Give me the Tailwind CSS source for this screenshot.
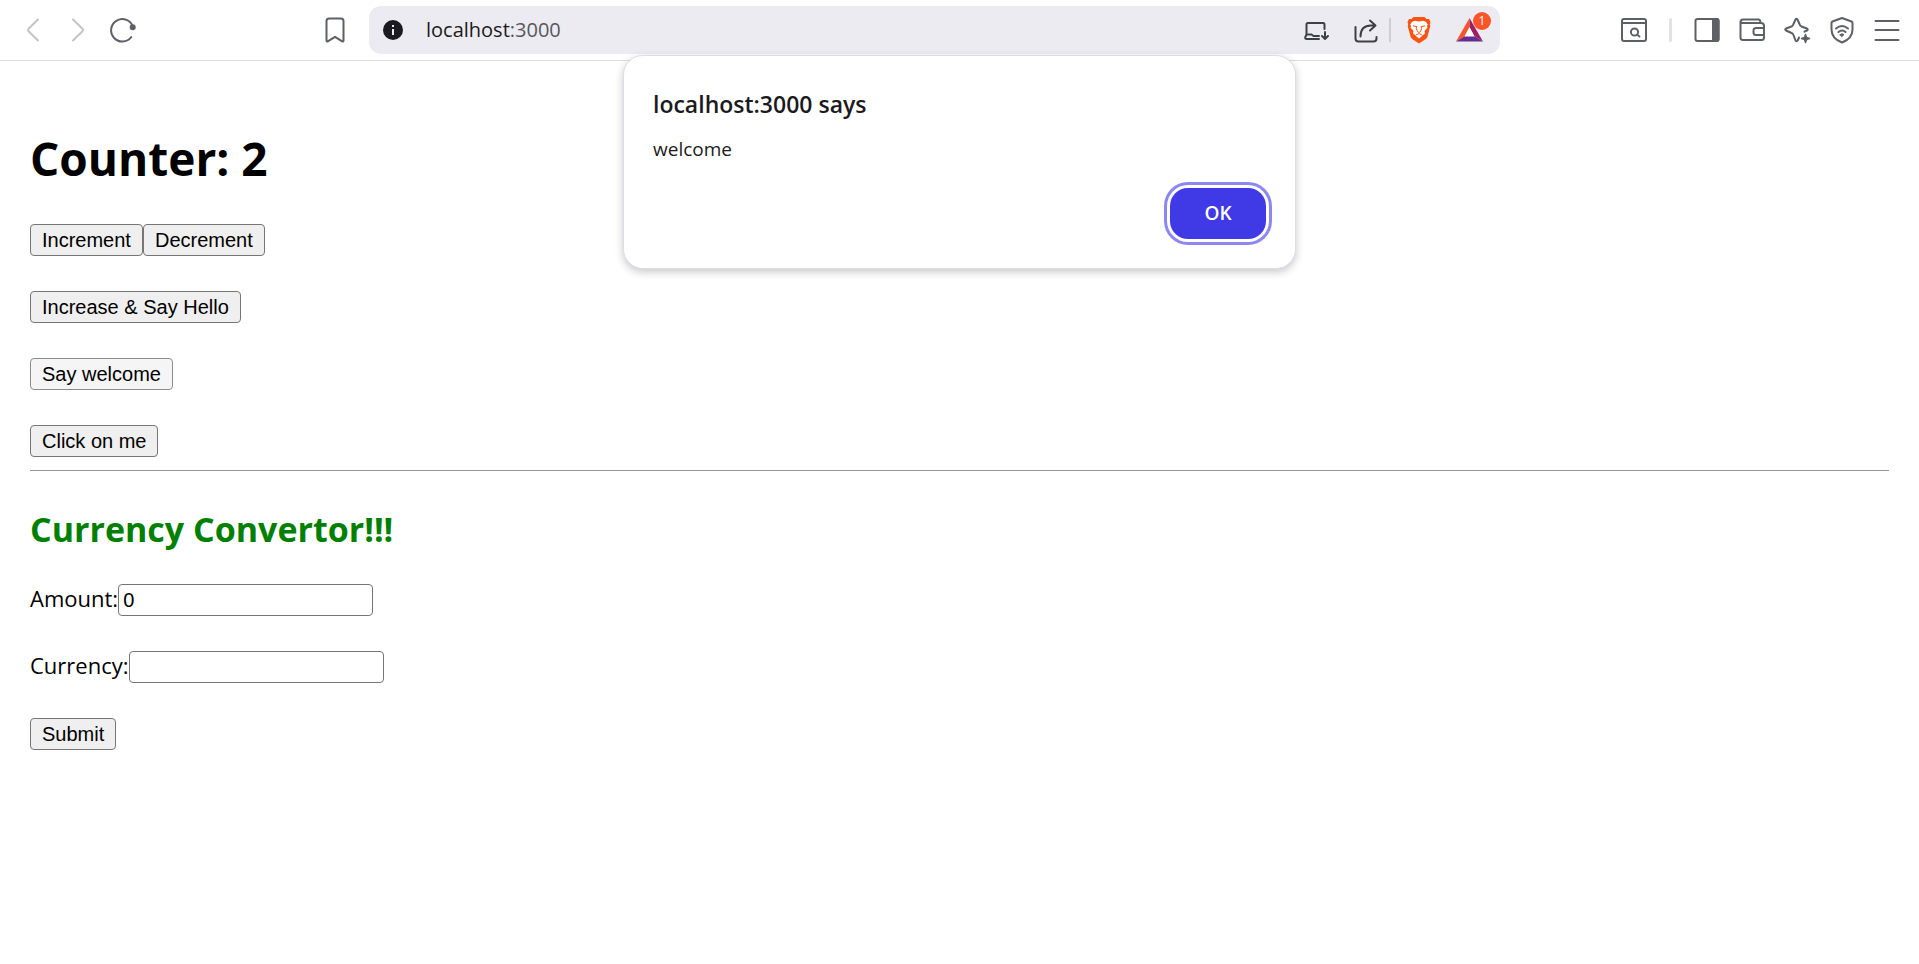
<!DOCTYPE html>
<html lang="en">
<head>
<meta charset="utf-8">
<meta name="viewport" content="width=device-width, initial-scale=1">
<title>localhost:3000</title>
<script src="https://cdn.jsdelivr.net/npm/@tailwindcss/browser@4"></script>
</head>
<body class="min-h-screen bg-white font-['Open_Sans',sans-serif] text-black">
  <header class="relative flex h-[61px] items-center border-b border-[#dfdfe2] text-[#5f6066]">
    <nav class="flex w-[369px] shrink-0 items-center pl-[18px]" aria-label="Navigation">
      <button type="button" aria-label="Back" class="mr-[15px] text-[#c3c3c8]">
        <svg class="size-[30px]" viewBox="0 0 30 30" fill="none" stroke="currentColor" stroke-width="2" stroke-linecap="round" stroke-linejoin="round"><path d="M20 4.500L10.300 14Q9.500 15 10.300 16L20 25.500"/></svg>
      </button>
      <button type="button" aria-label="Forward" class="mr-[15px] text-[#c3c3c8]">
        <svg class="size-[30px]" viewBox="0 0 30 30" fill="none" stroke="currentColor" stroke-width="2" stroke-linecap="round" stroke-linejoin="round"><path d="M10 4.500L19.700 14Q20.500 15 19.700 16L10 25.500"/></svg>
      </button>
      <button type="button" aria-label="Reload">
        <svg class="size-[30px]" viewBox="0 0 30 30" fill="none" stroke="currentColor" stroke-width="2" stroke-linecap="round"><path d="M25 12A11.200 11.200 0 1 0 23.300 22"/><circle cx="24.700" cy="12.200" r="3" fill="currentColor" stroke="none"/></svg>
      </button>
      <button type="button" aria-label="Bookmark this page" class="mr-[19px] ml-auto">
        <svg class="size-[30px]" viewBox="0 0 30 30" fill="none" stroke="currentColor" stroke-width="2" stroke-linejoin="round"><path d="M9 3.500H21Q23.500 3.500 23.500 6V25.500Q23.500 27 22.200 26.300L15 21.800L7.800 26.300Q6.500 27 6.500 25.500V6Q6.500 3.500 9 3.500Z"/></svg>
      </button>
    </nav>

    <div class="flex h-12 min-w-0 flex-1 items-center rounded-xl bg-[#ecebf1] pl-3.5 text-[#3f4046]">
      <button type="button" aria-label="View site information" class="mr-[23px]">
        <svg class="size-5" viewBox="0 0 20 20"><circle cx="10" cy="10" r="10" fill="#1b1a20"/><path d="M10 9v6M10 5v2" stroke="#ecebf1" stroke-width="2"/></svg>
      </button>
      <div class="min-w-0 flex-1 text-xl leading-6 text-[#57575d]"><span class="text-[#1b1a20]">localhost</span>:3000</div>
      <button type="button" aria-label="Install app" class="mr-5">
        <svg class="size-[30px]" viewBox="0 0 30 30" fill="none" stroke="currentColor" stroke-width="2" stroke-linecap="round" stroke-linejoin="round"><path d="M5.500 19.500V9.500Q5.500 8 7 8H22Q23.500 8 23.500 9.500V14M5.500 19.500L4.200 22.500Q4 24 5.500 24H18M5.500 19.500H10.500L12.500 21H18M24 17V23.500M21 21L24 24L27 21"/></svg>
      </button>
      <button type="button" aria-label="Share" class="mr-2">
        <svg class="size-[30px]" viewBox="0 0 30 30" fill="none" stroke="currentColor" stroke-width="2" stroke-linecap="round" stroke-linejoin="round"><path d="M4.500 12V23.500Q4.500 26.500 7.500 26.500H22.500Q25.500 26.500 25.500 23.500V22M9.500 21.500Q9.500 10.500 20 10.500H24M19 5.500L24.500 10.500L19 15.500"/></svg>
      </button>
      <span class="mr-4 h-6 w-[2px] bg-[#cfced4]"></span>
      <button type="button" aria-label="Brave Shields" class="mr-[25px]">
        <svg class="h-[28px] w-6" viewBox="0 0 24 28"><path d="M6.500 1H17.500L19.500 3H22L23.500 6L22.800 8.500L23.300 10L20.500 20.500Q20 22 18.500 23.200L12 27.500L5.500 23.200Q4 22 3.500 20.500L.7 10L1.200 8.500L.5 6L2 3H4.500Z" fill="#fb5411"/><path d="M8 4.700L12 5.400L16 4.700L18.800 5.700L20.800 8.500L20 10L20.500 11.500L17.500 15L18 17.500L15.500 19.200L14.500 20.500L12 22.500L9.500 20.500L8.500 19.200L6 17.500L6.500 15L3.500 11.500L4 10L3.200 8.500L5.200 5.700Z" fill="#fff"/><path d="M6 9.800L9.800 10.600L9.300 12.500L10.500 15.500L12 16.500L13.500 15.500L14.700 12.500L14.200 10.600L18 9.800M9 19L12 17.500L15 19" fill="none" stroke="#fb5411" stroke-width="1"/></svg>
      </button>
      <button type="button" aria-label="Brave Rewards, 1 notification" class="relative mr-[17px]">
        <svg class="h-6 w-[27px]" viewBox="0 0 27 24"><path d="M13.500 0L0 23.500L9 18L13.500 9.500Z" fill="#fb542b"/><path d="M13.500 0L27 23.500L18 18L13.500 9.500Z" fill="#9e1f63"/><path d="M0 23.500H27L18 18H9Z" fill="#662d91"/><path d="M13.500 9L18.500 18.500H8.500Z" fill="#fff"/></svg>
        <span class="absolute -top-1.5 left-[17px] flex h-[18px] w-[18px] items-center justify-center rounded-full bg-[#fb542b] text-xs text-white">1</span>
      </button>
    </div>

    <div class="flex w-[419px] shrink-0 items-center justify-end pr-[17px]">
      <button type="button" aria-label="Search tabs" class="mr-[20px]">
        <svg class="size-[30px]" viewBox="0 0 30 30" fill="none" stroke="currentColor" stroke-width="2" stroke-linecap="round"><rect x="3" y="4" width="24" height="22" rx="2"/><path d="M3 8H27M18.500 20L20.500 21.500"/><circle cx="15.500" cy="17" r="3.600"/></svg>
      </button>
      <span class="mr-[20px] h-6 w-[3px] rounded-full bg-[#e2e1e8]"></span>
      <button type="button" aria-label="Side panel" class="mr-[15px]">
        <svg class="size-[30px]" viewBox="0 0 30 30" fill="none" stroke="currentColor" stroke-width="2"><rect x="3.500" y="4" width="23" height="22" rx="2"/><path d="M21 4H25Q26.500 4 26.500 6V24Q26.500 26 25 26H21Z" fill="currentColor"/></svg>
      </button>
      <button type="button" aria-label="Wallet" class="mr-[15px]">
        <svg class="size-[30px]" viewBox="0 0 30 30" fill="none" stroke="currentColor" stroke-width="2" stroke-linejoin="round"><path d="M3.500 7.500Q3.500 4.500 6 4.500H21.500Q23.500 4.500 23.500 8M3.500 6.500Q4 8 6 8H24Q27 8 27 11V22.500Q27 25 24.500 25H6Q3.500 25 3.500 22.500V6.500M27 13H19Q16.500 13 16.500 15.500V17.500Q16.500 20 19 20H27"/></svg>
      </button>
      <button type="button" aria-label="Leo AI" class="mr-[15px]">
        <svg class="size-[30px]" viewBox="0 0 30 30" fill="none" stroke="currentColor" stroke-width="2" stroke-linejoin="round" stroke-linecap="round"><path d="M17 22.500L15.700 25.500Q14.500 27 13.500 25.500L11.500 20Q11 18.500 9.500 18L4 15.500Q2.500 14.500 4 13.500L9.500 11.500Q11 11 11.500 9L13.500 4.500Q14.500 3 15.500 4.500L17.500 9Q18 11 19.500 11.500L25 13.500Q26.500 14.500 25 15.500L22.500 16.700"/><path d="M23.500 19.500L24.500 22.500L27.500 23.500L24.500 24.500L23.500 27.500L22.500 24.500L19.500 23.500L22.500 22.500Z" fill="currentColor" stroke-width="1.500"/></svg>
      </button>
      <button type="button" aria-label="VPN" class="mr-[15px]">
        <svg class="size-[30px]" viewBox="0 0 30 30" fill="none" stroke="currentColor" stroke-width="2" stroke-linejoin="round" stroke-linecap="round"><path d="M15 3L24.500 6.500Q25.500 7 25.500 8V14.500Q25.500 23.500 15 27.500Q4.500 23.500 4.500 14.500V8Q4.500 7 5.500 6.500ZM9 13.500Q15 8.500 21 13.500M11.500 17Q15 14 18.500 17"/><path d="M13 19.500Q15 18 17 19.500L15 21.500Z" fill="currentColor" stroke-width="1"/></svg>
      </button>
      <button type="button" aria-label="Menu">
        <svg class="size-[30px]" viewBox="0 0 30 30" fill="none" stroke="currentColor" stroke-width="2" stroke-linecap="round"><path d="M3.500 6H26.500M3.500 15H26.500M3.500 25H26.500"/></svg>
      </button>
    </div>

    <div role="dialog" aria-labelledby="dialog-title" class="absolute inset-x-0 top-[55px] mx-auto flex w-[673px] flex-col rounded-[20px] border border-[#dedde5] bg-white px-[29px] pt-[33px] pb-[29px] text-[#1b1a20] shadow-[0_3px_8px_rgba(0,0,0,0.22)]">
      <h2 id="dialog-title" class="text-[23px] leading-[30px] font-semibold">localhost:3000 says</h2>
      <p class="mt-[18px] text-[19px] leading-6">welcome</p>
      <button type="button" class="mt-[27px] h-[51px] w-24 self-end rounded-[18px] bg-[#4039e6] text-[19px] font-semibold text-white ring-3 ring-[#8c88f0] ring-offset-3 ring-offset-white">OK</button>
    </div>
  </header>

  <main class="px-[30px] pt-[65px] text-[22px] leading-7">
    <h1 class="text-[46px] leading-[64px] font-bold">Counter: 2</h1>
    <div class="mt-[34px] flex flex-col items-start gap-[35px] font-['Liberation_Sans',sans-serif] text-xl leading-[30px]">
      <div class="flex">
        <button type="button" class="rounded-[4px] border border-[#767676] bg-[#efefef] px-[11px]">Increment</button>
        <button type="button" class="rounded-[4px] border border-[#767676] bg-[#efefef] px-[11px]">Decrement</button>
      </div>
      <button type="button" class="rounded-[4px] border border-[#767676] bg-[#efefef] px-[11px]">Increase &amp; Say Hello</button>
      <button type="button" class="rounded-[4px] border border-[#8d8d8d] bg-[#f5f5f5] px-[11px]">Say welcome</button>
      <button type="button" class="rounded-[4px] border border-[#767676] bg-[#efefef] px-[11px]">Click on me</button>
    </div>
    <hr class="mt-[13px] border-t border-[#999999]">
    <h2 class="mt-[35px] text-[34px] leading-[46px] font-bold text-[#008000]">Currency Convertor!!!</h2>
    <form class="mt-8 flex flex-col items-start gap-[35px]">
      <div class="flex">
        <label for="amount">Amount:</label>
        <input id="amount" type="text" value="0" class="h-8 w-[255px] rounded-[4px] border border-[#767676] bg-white px-1 font-['Liberation_Sans',sans-serif] text-xl">
      </div>
      <div class="flex">
        <label for="currency">Currency:</label>
        <input id="currency" type="text" class="h-8 w-[255px] rounded-[4px] border border-[#767676] bg-white px-1 font-['Liberation_Sans',sans-serif] text-xl">
      </div>
      <button type="button" class="rounded-[4px] border border-[#767676] bg-[#efefef] px-[11px] font-['Liberation_Sans',sans-serif] text-xl leading-[30px]">Submit</button>
    </form>
  </main>
</body>
</html>
